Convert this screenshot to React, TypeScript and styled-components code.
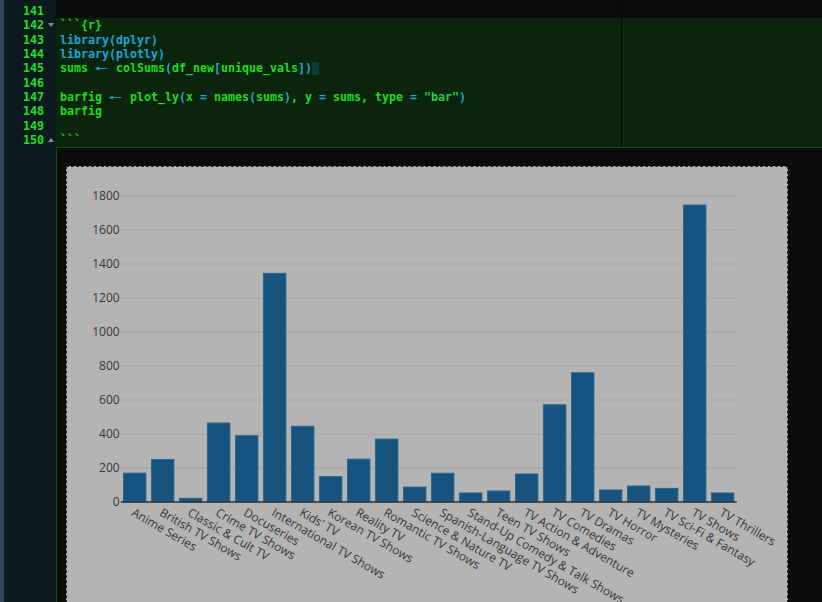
import React from "react";
import styled, { createGlobalStyle } from "styled-components";

const GlobalStyle = createGlobalStyle`
  html, body { margin: 0; padding: 0; background: #0b0b0b; overflow: hidden; }
  #root { width: 822px; height: 602px; overflow: hidden; }
`;

const LINE_H = 14.33;

const Screen = styled.div`
  display: flex;
  width: 822px;
  height: 602px;
  overflow: hidden;
  background: #0b0b0b;
  font-family: "DejaVu Sans Mono", "Liberation Mono", monospace;
  font-size: 11.63px;
`;

const LeftStrip = styled.div`
  width: 4px;
  flex: none;
  background: #2d475f;
`;

const Gutter = styled.div`
  width: 52px;
  flex: none;
  background: #0b1a1c;
  padding-top: 4px;
  box-sizing: border-box;
`;

const GutterRow = styled.div`
  height: ${LINE_H}px;
  line-height: ${LINE_H}px;
  display: flex;
  align-items: center;
`;

const LineNo = styled.span`
  width: 40px;
  text-align: right;
  color: #1fe01f;
  font-weight: bold;
`;

const Fold = styled.span<{ $up?: boolean }>`
  width: 0;
  height: 0;
  margin-left: 4px;
  border-left: 3px solid transparent;
  border-right: 3px solid transparent;
  ${(p) =>
    p.$up
      ? "border-bottom: 4px solid #8c8c8c;"
      : "border-top: 4px solid #8c8c8c;"}
`;

const Main = styled.div`
  flex: 1;
  display: flex;
  flex-direction: column;
  min-width: 0;
`;

const Editor = styled.div`
  position: relative;
  padding-top: 4px;
`;

const PrintMargin = styled.div`
  position: absolute;
  left: 565px;
  top: 0;
  bottom: 0;
  width: 1px;
  background: #050505;
`;

const Chunk = styled.div`
  background: #0a250b;
`;

const CodeLine = styled.div`
  height: ${LINE_H}px;
  line-height: ${LINE_H}px;
  padding-left: 4px;
  white-space: pre;
  font-weight: bold;
  display: flex;
  align-items: center;
`;

const colors: Record<string, string> = {
  g: "#19df19",
  c: "#1ba6dc",
  s: "#22cf4c",
};

const Tok = styled.span<{ $k: string }>`
  color: ${(p) => colors[p.$k]};
`;

const Arrow = styled.span`
  display: inline-block;
  width: 14px;
  text-align: center;
  color: #1ba6dc;
  transform: scaleX(1.9);
  font-weight: normal;
`;

const Cursor = styled.span`
  display: inline-block;
  width: 7px;
  height: 13px;
  background: #0d3c37;
`;

const Output = styled.div`
  flex: 1;
  border-top: 1px solid #134d13;
  border-left: 1px solid #134d13;
  padding: 18px 0 0 9px;
  background: #0b0b0b;
`;

const PlotFrame = styled.div`
  width: 720px;
  height: 470px;
  border: 1px dashed #2c2c2c;
  background: #b4b4b4;
`;

const AxisText = styled.text`
  font-family: "Open Sans", Verdana, Arial, sans-serif;
  font-size: 12px;
  fill: #363636;
`;

type T = [string, string];

const lines: { n: number; toks: (T | "arrow" | "cursor")[]; fold?: "down" | "up" }[] = [
  { n: 142, fold: "down", toks: [["g", "```{r}"]] },
  { n: 143, toks: [["c", "library(dplyr)"]] },
  { n: 144, toks: [["c", "library(plotly)"]] },
  {
    n: 145,
    toks: [
      ["g", "sums "],
      "arrow",
      ["g", " colSums"],
      ["c", "("],
      ["g", "df_new"],
      ["c", "["],
      ["g", "unique_vals"],
      ["c", "])"],
      "cursor",
    ],
  },
  { n: 146, toks: [] },
  {
    n: 147,
    toks: [
      ["g", "barfig "],
      "arrow",
      ["g", " plot_ly"],
      ["c", "("],
      ["g", "x "],
      ["c", "="],
      ["g", " names"],
      ["c", "("],
      ["g", "sums"],
      ["c", ")"],
      ["g", ", y "],
      ["c", "="],
      ["g", " sums, type "],
      ["c", "="],
      ["s", ' "bar"'],
      ["c", ")"],
    ],
  },
  { n: 148, toks: [["g", "barfig"]] },
  { n: 149, toks: [] },
  { n: 150, fold: "up", toks: [["g", "```"]] },
];

const data: [string, number][] = [
  ["Anime Series", 170],
  ["British TV Shows", 250],
  ["Classic & Cult TV", 22],
  ["Crime TV Shows", 465],
  ["Docuseries", 390],
  ["International TV Shows", 1345],
  ["Kids' TV", 445],
  ["Korean TV Shows", 149],
  ["Reality TV", 252],
  ["Romantic TV Shows", 370],
  ["Science & Nature TV", 88],
  ["Spanish-Language TV Shows", 169],
  ["Stand-Up Comedy & Talk Shows", 53],
  ["Teen TV Shows", 65],
  ["TV Action & Adventure", 165],
  ["TV Comedies", 572],
  ["TV Dramas", 760],
  ["TV Horror", 71],
  ["TV Mysteries", 94],
  ["TV Sci-Fi & Fantasy", 80],
  ["TV Shows", 1747],
  ["TV Thrillers", 53],
];

const X0 = 53.7;
const PW = 616;
const Y0 = 335;
const K = 0.17;

function Chart() {
  const step = PW / data.length;
  const bw = step * 0.8;
  const ticks = [0, 200, 400, 600, 800, 1000, 1200, 1400, 1600, 1800];
  return (
    <svg width={720} height={470}>
      {ticks.slice(1).map((t) => (
        <line key={t} x1={X0} x2={X0 + PW} y1={Y0 - t * K} y2={Y0 - t * K} stroke="#a6a6a6" strokeWidth={1} />
      ))}
      {ticks.map((t) => (
        <AxisText key={"l" + t} x={X0 - 1} y={Y0 - t * K + 4} textAnchor="end">
          {t}
        </AxisText>
      ))}
      {data.map(([name, v], i) => {
        const cx = X0 + step * (i + 0.5);
        const h = v * K;
        return (
          <rect
            key={name}
            x={cx - bw / 2}
            y={Y0 - h}
            width={bw}
            height={h}
            fill="#16547f"
            stroke="#2c6690"
            strokeWidth={1}
          />
        );
      })}
      <line x1={X0} x2={X0 + PW} y1={Y0} y2={Y0} stroke="#303030" strokeWidth={1.5} />
      {data.map(([name], i) => {
        const cx = X0 + step * (i + 0.5) - 4;
        const y = Y0 + 13;
        return (
          <AxisText key={"x" + name} x={cx} y={y} transform={`rotate(30 ${cx} ${y})`} textAnchor="start">
            {name}
          </AxisText>
        );
      })}
    </svg>
  );
}

export default function App() {
  return (
    <>
      <GlobalStyle />
      <Screen>
        <LeftStrip />
        <Gutter>
          <GutterRow>
            <LineNo>141</LineNo>
          </GutterRow>
          {lines.map((l) => (
            <GutterRow key={l.n}>
              <LineNo>{l.n}</LineNo>
              {l.fold && <Fold $up={l.fold === "up"} />}
            </GutterRow>
          ))}
        </Gutter>
        <Main>
          <Editor>
            <CodeLine />
            <Chunk>
              {lines.map((l) => (
                <CodeLine key={l.n}>
                  {l.toks.map((t, i) =>
                    t === "arrow" ? (
                      <Arrow key={i}>←</Arrow>
                    ) : t === "cursor" ? (
                      <Cursor key={i} />
                    ) : (
                      <Tok key={i} $k={t[0]}>
                        {t[1]}
                      </Tok>
                    )
                  )}
                </CodeLine>
              ))}
            </Chunk>
            <PrintMargin />
          </Editor>
          <Output>
            <PlotFrame>
              <Chart />
            </PlotFrame>
          </Output>
        </Main>
      </Screen>
    </>
  );
}
